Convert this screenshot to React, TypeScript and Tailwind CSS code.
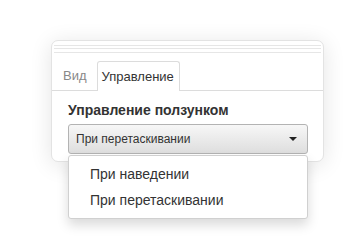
import { useState } from 'react'

const OPTIONS = ['При наведении', 'При перетаскивании']

export default function App() {
  const [tab, setTab] = useState(1)
  const [value, setValue] = useState(OPTIONS[1])
  const [open, setOpen] = useState(true)

  return (
    <div className="w-[363px] h-[244px] bg-white pt-[40px] pl-[51px] font-['Liberation_Sans',Arial,sans-serif] text-[#333]">
      <div className="relative w-[273px] h-[122px] rounded-[7px] border border-[#e3e3e3] bg-white shadow-[0_3px_22px_rgba(0,0,0,0.11)]">
        {/* collapsed title bar lines */}
        <div className="flex flex-col gap-[2px] pt-[4px] px-[2px]">
          <div className="h-px bg-[#e6e6e6]" />
          <div className="h-px bg-[#e6e6e6]" />
          <div className="h-px bg-[#e6e6e6] mt-[1px]" />
        </div>

        {/* tabs */}
        <div className="mt-[8px] flex items-end border-b border-[#dcdcdc] pl-[7px] h-[30px]">
          {['Вид', 'Управление'].map((t, i) => (
            <button
              key={t}
              onClick={() => setTab(i)}
              className={
                tab === i
                  ? 'h-[30px] -mb-px px-[4px] pr-[5px] border border-b-0 border-[#dcdcdc] rounded-t-[3px] bg-white text-[13px] text-[#333] leading-none'
                  : 'h-[30px] px-[4px] mr-[6px] text-[13px] text-[#888] leading-none'
              }
            >
              {t}
            </button>
          ))}
        </div>

        <div className="px-[16px]">
          <div className="mt-[9px] text-[14px] font-bold leading-[20px] text-[#333]">Управление ползунком</div>
          <button
            onClick={() => setOpen(!open)}
            className="mt-[4px] w-[240px] h-[30px] flex items-center justify-between pl-[7px] pr-[10px] rounded-[3px] border border-[#b3b3b3] bg-gradient-to-b from-[#f7f7f7] to-[#dedede] text-[12px] text-[#333]"
          >
            <span>{value}</span>
            <span className="w-0 h-0 border-l-[4px] border-r-[4px] border-t-[4px] border-l-transparent border-r-transparent border-t-[#222]" />
          </button>
        </div>

        {open && (
          <div className="absolute left-[16px] top-[114px] w-[240px] py-[5px] rounded-[3px] border border-[#d0d0d0] bg-white shadow-[0_6px_12px_rgba(0,0,0,0.15)] z-10">
            {OPTIONS.map(o => (
              <div
                key={o}
                onClick={() => { setValue(o); setOpen(false) }}
                className="h-[26px] flex items-center pl-[21px] text-[14px] text-[#333] cursor-pointer"
              >
                {o}
              </div>
            ))}
          </div>
        )}
      </div>
    </div>
  )
}
